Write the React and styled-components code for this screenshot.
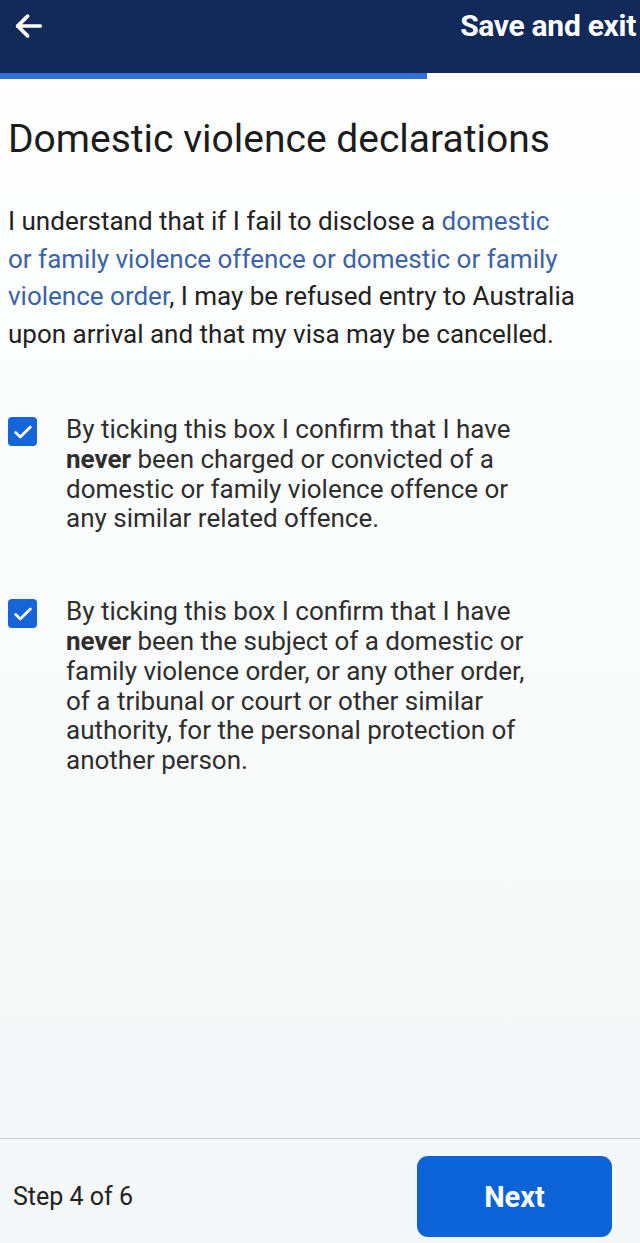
import React, { useState } from "react";
import styled, { createGlobalStyle } from "styled-components";

const GlobalStyle = createGlobalStyle`
  html, body {
    margin: 0;
    padding: 0;
    background: #fbfcfc;
  }
  body {
    font-family: Roboto, "Liberation Sans", Arial, sans-serif;
    color: #1f1f1f;
  }
`;

const Page = styled.div`
  display: flex;
  flex-direction: column;
  height: 1243px;
  background: linear-gradient(#ffffff, #f4f7f7);
`;

const Header = styled.header`
  display: flex;
  align-items: center;
  justify-content: space-between;
  height: 73px;
  padding: 0 4px 22px 12px;
  box-sizing: border-box;
  background: #13295a;
`;

const BackButton = styled.button`
  display: flex;
  background: none;
  border: 0;
  padding: 0;
  color: #fff;
  cursor: pointer;
`;

const SaveExit = styled.span`
  color: #fff;
  font-weight: 700;
  font-size: 30px;
  letter-spacing: -0.3px;
`;

const Progress = styled.div`
  height: 6px;
  background: #ffffff;
`;

const ProgressFill = styled.div`
  height: 100%;
  background: #3170d8;
`;

const Content = styled.main`
  flex: 1;
  padding: 0 8px;
`;

const Title = styled.h1`
  margin: 37px 0 0;
  font-size: 39px;
  line-height: 46px;
  font-weight: 400;
  color: #1c1c1c;
`;

const Intro = styled.p`
  margin: 41px 0 0;
  max-width: 568px;
  font-size: 26px;
  line-height: 37.5px;
  color: #222;
`;

const Link = styled.a`
  color: #3b63a8;
  text-decoration: none;
`;

const Declarations = styled.div`
  display: flex;
  flex-direction: column;
  gap: 63px;
  margin-top: 62px;
`;

const Row = styled.label`
  display: flex;
  align-items: flex-start;
  gap: 29px;
  cursor: pointer;
`;

const Box = styled.span`
  flex: 0 0 29px;
  height: 29px;
  margin-top: 2px;
  border-radius: 4px;
  background: ${(p) => (p.checked ? "#1565d8" : "#fff")};
  border: ${(p) => (p.checked ? "0" : "2px solid #555")};
  box-sizing: border-box;
  display: flex;
  align-items: center;
  justify-content: center;
`;

const RowText = styled.span`
  font-size: 26px;
  line-height: 29.8px;
  color: #2e2e2e;
  max-width: 470px;
`;

const Footer = styled.footer`
  display: flex;
  align-items: center;
  justify-content: space-between;
  border-top: 1px solid #c9cfd0;
  margin-top: auto;
  padding: 17px 28px 6px 13px;
`;

const StepLabel = styled.span`
  font-size: 25px;
  color: #222;
`;

const NextButton = styled.button`
  width: 195px;
  height: 81px;
  border: 0;
  border-radius: 11px;
  background: #0c63d8;
  color: #fff;
  font-family: inherit;
  font-weight: 700;
  font-size: 29px;
  cursor: pointer;
`;

const Check = () => (
  <svg width="22" height="22" viewBox="0 0 24 24" fill="none">
    <path d="M4 12.5l5 5L20 6.5" stroke="#fff" strokeWidth="3" strokeLinecap="round" strokeLinejoin="round" />
  </svg>
);

const declarations = [
  <>
    By ticking this box I confirm that I have <b>never</b> been charged or convicted of a domestic or
    family violence offence or any similar related offence.
  </>,
  <>
    By ticking this box I confirm that I have <b>never</b> been the subject of a domestic or family
    violence order, or any other order, of a tribunal or court or other similar authority, for the
    personal protection of another person.
  </>,
];

export default function App() {
  const [checked, setChecked] = useState([true, true]);
  const step = 4;
  const total = 6;

  const toggle = (i) => setChecked((c) => c.map((v, j) => (j === i ? !v : v)));

  return (
    <>
      <GlobalStyle />
      <Page>
        <Header>
          <BackButton aria-label="Back">
            <svg width="34" height="34" viewBox="0 0 24 24" fill="none" stroke="currentColor" strokeWidth="2.6" strokeLinecap="round" strokeLinejoin="round">
              <path d="M20 12H4" />
              <path d="M11 5l-7 7 7 7" />
            </svg>
          </BackButton>
          <SaveExit>Save and exit</SaveExit>
        </Header>
        <Progress>
          <ProgressFill style={{ width: `${(step / total) * 100}%` }} />
        </Progress>
        <Content>
          <Title>Domestic violence declarations</Title>
          <Intro>
            I understand that if I fail to disclose a{" "}
            <Link href="#">domestic or family violence offence or domestic or family violence order</Link>, I
            may be refused entry to Australia upon arrival and that my visa may be cancelled.
          </Intro>
          <Declarations>
            {declarations.map((text, i) => (
              <Row key={i} onClick={() => toggle(i)}>
                <Box checked={checked[i]}>{checked[i] && <Check />}</Box>
                <RowText>{text}</RowText>
              </Row>
            ))}
          </Declarations>
        </Content>
        <Footer>
          <StepLabel>
            Step {step} of {total}
          </StepLabel>
          <NextButton>Next</NextButton>
        </Footer>
      </Page>
    </>
  );
}
